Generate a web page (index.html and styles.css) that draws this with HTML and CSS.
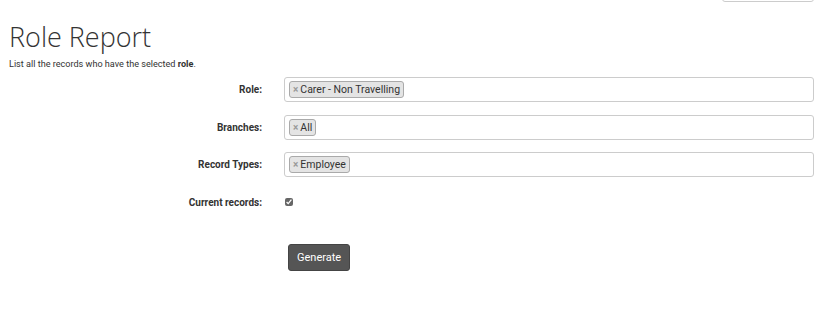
FILE: index.html
```html
<!DOCTYPE html>
<html lang="en">
<head>
    <meta charset="UTF-8">
    <title>Role Report</title>
    <link rel="stylesheet" href="styles.css">
</head>
<body>
    <div class="top-bar">
        <button class="top-btn"></button>
    </div>

    <h1>Role Report</h1>
    <p class="intro">List all the records who have the selected <b>role</b>.</p>

    <form class="report-form">
        <label class="form-label">Role:</label>
        <div class="select-box">
            <span class="tag"><span class="tag-x">&times;</span>Carer - Non Travelling</span>
        </div>

        <label class="form-label">Branches:</label>
        <div class="select-box">
            <span class="tag"><span class="tag-x">&times;</span>All</span>
        </div>

        <label class="form-label">Record Types:</label>
        <div class="select-box">
            <span class="tag"><span class="tag-x">&times;</span>Employee</span>
        </div>

        <label class="form-label">Current records:</label>
        <div class="check-cell">
            <input type="checkbox" checked>
        </div>

        <div></div>
        <div class="btn-cell">
            <button type="button" class="generate-btn">Generate</button>
        </div>
    </form>
</body>
</html>
```

FILE: styles.css
```css
* {
    margin: 0;
    padding: 0;
    box-sizing: border-box;
}

body {
    font-family: Roboto, "Liberation Sans", Arial, sans-serif;
    font-size: 10px;
    color: #333;
    background: #fff;
    padding: 0 10px 0 9px;
}

.top-bar {
    display: flex;
    justify-content: flex-end;
    height: 2px;
}

.top-btn {
    width: 92px;
    height: 12px;
    margin-top: -10px;
    border: 1px solid #ccc;
    border-radius: 3px;
    background: #fff;
}

h1 {
    font-family: "Open Sans", sans-serif;
    font-weight: 300;
    font-size: 27px;
    color: #333;
    margin-top: 18px;
    line-height: 34px;
}

.intro {
    margin-top: 5px;
    font-size: 9.1px;
}

.report-form {
    display: grid;
    grid-template-columns: 253px 1fr;
    column-gap: 22px;
    row-gap: 12.5px;
    align-items: center;
    margin-top: 8px;
}

.form-label {
    font-weight: bold;
    text-align: right;
    font-size: 10px;
}

.select-box {
    height: 25px;
    border: 1px solid #ccc;
    border-radius: 3px;
    padding: 3px 4px;
    display: flex;
    align-items: center;
}

.tag {
    display: inline-flex;
    align-items: center;
    height: 17px;
    background: #e4e4e4;
    border: 1px solid #aaa;
    border-radius: 3px;
    padding: 0 3px;
    font-size: 10.5px;
    color: #333;
}

.tag-x {
    color: #999;
    font-size: 10px;
    font-weight: bold;
    margin-right: 2px;
}

.check-cell {
    height: 25px;
    display: flex;
    align-items: center;
}

.check-cell input {
    width: 8px;
    height: 8px;
    margin-left: 1px;
    accent-color: #666;
}

.btn-cell {
    padding-top: 17px;
    padding-left: 4px;
}

.generate-btn {
    background: #555;
    color: #fff;
    border: 1px solid #444;
    border-radius: 3px;
    height: 27px;
    padding: 0 8px;
    font-family: Roboto, sans-serif;
    font-size: 11px;
}
```
